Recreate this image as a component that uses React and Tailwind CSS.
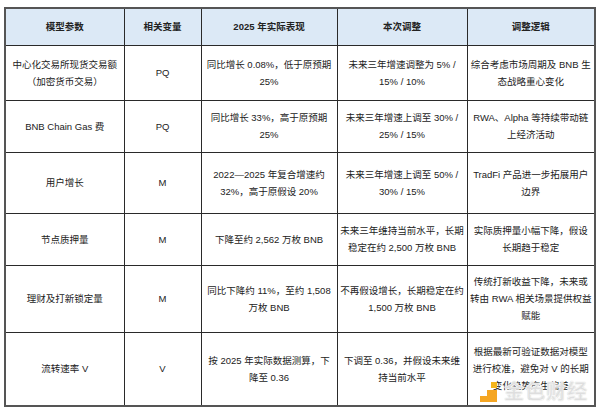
import React from "react";

const rows = [
  {
    h: "h-[55px]",
    a: ["中心化交易所现货交易额", "（加密货币交易）"],
    b: "PQ",
    c: ["同比增长 0.08%，低于原预期", "25%"],
    d: ["未来三年增速调整为 5% /", "15% / 10%"],
    e: ["综合考虑市场周期及 BNB 生", "态战略重心变化"],
  },
  {
    h: "h-[52px]",
    a: ["BNB Chain Gas 费"],
    b: "PQ",
    c: ["同比增长 33%，高于原预期", "25%"],
    d: ["未来三年增速上调至 30% /", "25% / 15%"],
    e: ["RWA、Alpha 等持续带动链", "上经济活动"],
  },
  {
    h: "h-[61px]",
    a: ["用户增长"],
    b: "M",
    c: ["2022—2025 年复合增速约", "32%，高于原假设 20%"],
    d: ["未来三年增速上调至 50% /", "30% / 15%"],
    e: ["TradFi 产品进一步拓展用户", "边界"],
  },
  {
    h: "h-[52px]",
    a: ["节点质押量"],
    b: "M",
    c: ["下降至约 2,562 万枚 BNB"],
    d: ["未来三年维持当前水平，长期", "稳定在约 2,500 万枚 BNB"],
    e: ["实际质押量小幅下降，假设", "长期趋于稳定"],
  },
  {
    h: "h-[67px]",
    a: ["理财及打新锁定量"],
    b: "M",
    c: ["同比下降约 11%，至约 1,508", "万枚 BNB"],
    d: ["不再假设增长，长期稳定在约", "1,500 万枚 BNB"],
    e: ["传统打新收益下降，未来或", "转由 RWA 相关场景提供权益", "赋能"],
  },
  {
    h: "h-[74px]",
    a: ["流转速率 V"],
    b: "V",
    c: ["按 2025 年实际数据测算，下", "降至 0.36"],
    d: ["下调至 0.36，并假设未来维", "持当前水平"],
    e: ["根据最新可验证数据对模型", "进行校准，避免对 V 的长期", "变化趋势产生偏差"],
  },
];

function Lines({ items }) {
  return (
    <div className="flex flex-col items-center">
      {items.map((t, i) => (
        <span key={i} className="whitespace-nowrap">{t}</span>
      ))}
    </div>
  );
}

function Watermark() {
  return (
    <div className="absolute right-[6px] bottom-[4px] flex items-center gap-[3px]">
      <svg width="22" height="22" viewBox="0 0 22 22">
        <rect x="12" y="1" width="6" height="6" fill="#f5b51c" />
        <path d="M1 9 H18 V21 H1 V15 H8 V9 Z" fill="#f5a623" />
      </svg>
      <span className="text-[20px] leading-none font-bold text-[#dedede] tracking-[1px] [-webkit-text-stroke:0.5px_#ffffff] [text-shadow:0_0_1px_#aaa]">
        金色财经
      </span>
    </div>
  );
}

export default function App() {
  const cell = "border border-[#2a2a2a] text-center align-middle";
  return (
    <div className="w-[600px] h-[410px] bg-white pt-[7px] pl-[4px] overflow-hidden font-['Liberation_Sans','Noto_Sans_CJK_SC',sans-serif] text-[9.5px] leading-[17px] text-[#222]">
      <div className="relative w-[590px]">
        <table className="w-[590px] table-fixed border-collapse border-2 border-[#555]">
          <colgroup>
            <col className="w-[119px]" />
            <col className="w-[77px]" />
            <col className="w-[136px]" />
            <col className="w-[130px]" />
            <col className="w-[128px]" />
          </colgroup>
          <thead>
            <tr className="h-[37px] bg-[#dce9f6] font-bold">
              <th className={cell}>模型参数</th>
              <th className={cell}>相关变量</th>
              <th className={cell}>2025 年实际表现</th>
              <th className={cell}>本次调整</th>
              <th className={cell}>调整逻辑</th>
            </tr>
          </thead>
          <tbody>
            {rows.map((r, i) => (
              <tr key={i} className={r.h}>
                <td className={cell}><Lines items={r.a} /></td>
                <td className={cell}>{r.b}</td>
                <td className={cell}><Lines items={r.c} /></td>
                <td className={cell}><Lines items={r.d} /></td>
                <td className={cell}><Lines items={r.e} /></td>
              </tr>
            ))}
          </tbody>
        </table>
        <Watermark />
      </div>
    </div>
  );
}
